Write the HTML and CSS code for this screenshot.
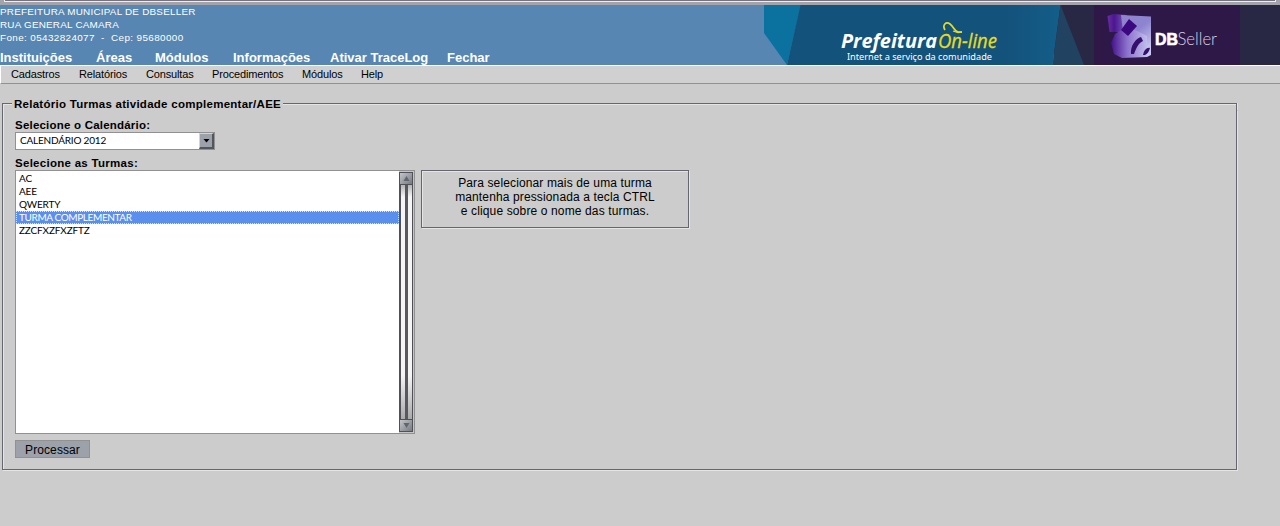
FILE: index.html
```html
<!DOCTYPE html>
<html lang="pt-BR">
<head>
<meta charset="utf-8">
<title>Relatório Turmas</title>
<link rel="stylesheet" href="styles.css">
</head>
<body>
<div class="frame-edge"><div class="frame-line"></div></div>
<header class="banner">
  <div class="banner-info">
    <div class="address">
      <div class="a1">PREFEITURA MUNICIPAL DE DBSELLER</div>
      <div class="a2">RUA GENERAL CAMARA</div>
      <div class="a3">Fone: 05432824077 &nbsp;-&nbsp; Cep: 95680000</div>
    </div>
    <nav class="main-nav"><a>Instituições</a><a>Áreas</a><a>Módulos</a><a>Informações</a><a>Ativar TraceLog</a><a>Fechar</a></nav>
  </div>
  <svg class="banner-art" width="516" height="60" viewBox="0 0 516 60">
    <defs>
      <linearGradient id="sea" x1="0" x2="1"><stop offset="0" stop-color="#13527b"/><stop offset=".8" stop-color="#13527b"/><stop offset="1" stop-color="#135e8a"/></linearGradient>
      <linearGradient id="side" x1="0" x2="1"><stop offset="0" stop-color="#6b2da6"/><stop offset=".35" stop-color="#4b168f"/><stop offset="1" stop-color="#7b5cc0"/></linearGradient>
      <linearGradient id="face" x1="0" y1="0" x2=".6" y2="1"><stop offset="0" stop-color="#9184cc"/><stop offset=".5" stop-color="#8d83cf"/><stop offset="1" stop-color="#c9c8f0"/></linearGradient>
      <linearGradient id="front" x1="0" x2="1"><stop offset="0" stop-color="#43108a"/><stop offset=".45" stop-color="#8c72cc"/><stop offset="1" stop-color="#c0bdec"/></linearGradient>
    </defs>
    <path fill="#282845" d="M290 0h226v60H290z"/>
    <path fill="#0b719f" d="M0 0h37L23 60 0 28z"/>
    <path fill="url(#sea)" d="M36.500 0H296.500L288.500 60H23z"/>
    <path fill="#214361" d="M296.500 0 320 60h-31.500z"/>
    <path fill="#2d1848" d="M330 0h146v60H330z"/>
    <path fill="url(#side)" d="M343.500 11l6-2 13 1v17h-17z"/>
    <path fill="url(#face)" d="M357 10l30 1.500V50l-4 2-22-8z"/>
    <path fill="url(#front)" d="M351 29l12-8 20 10v21l-25 1-8-4-3-11z"/>
    <path fill="#3c087f" d="M365 14l8 7-9 10-7-6z"/>
    <path fill="#35106c" d="M367 49c-1-8 5-16 10-17l2 4c-5 2-7 8-9 13zM379 50c1-5 4-8 7-7-1 4-3 6-5 7z"/>
    <text class="prefeitura" x="77" y="43" textLength="96" lengthAdjust="spacingAndGlyphs">Prefeitura</text>
    <text class="online" x="174" y="43" textLength="59" lengthAdjust="spacingAndGlyphs">On-line</text>
    <path fill="none" stroke="#e9dc1d" stroke-width="1.700" d="M181 25c-3-5 1-9 5-6 4 3 5 9 9 8h3"/>
    <path fill="none" stroke="#e9dc1d" stroke-width="1.300" d="M189 26l5 1.500 4-.5"/>
    <text class="tagline" x="83" y="54.500" textLength="145" lengthAdjust="spacingAndGlyphs">Internet a serviço da comunidade</text>
    <text class="db" x="391" y="39.500" textLength="23" lengthAdjust="spacingAndGlyphs">DB</text>
    <text class="seller" x="413.500" y="39.500" textLength="39.500" lengthAdjust="spacingAndGlyphs">Seller</text>
  </svg>
</header>
<nav class="sub-nav"><a>Cadastros</a><a>Relatórios</a><a>Consultas</a><a>Procedimentos</a><a>Módulos</a><a>Help</a></nav>
<main class="panel">
  <div class="legend-row"><span class="legend-lead"></span><span class="legend">Relatório Turmas atividade complementar/AEE</span><span class="legend-rule"></span></div>
  <div class="panel-body">
    <div class="label">Selecione o Calendário:</div>
    <div class="combo"><span class="combo-text">CALENDÁRIO 2012</span><span class="combo-button"><svg width="7" height="4"><path d="M.5 0h6L3.500 3.500z"/></svg></span></div>
    <div class="label second">Selecione as Turmas:</div>
    <div class="row">
      <div class="listbox">
        <div class="options">
          <div class="option">AC</div>
          <div class="option">AEE</div>
          <div class="option">QWERTY</div>
          <div class="option selected">TURMA COMPLEMENTAR</div>
          <div class="option">ZZCFXZFXZFTZ</div>
        </div>
        <div class="scrollbar">
          <span class="arrow"><svg width="7" height="5"><path d="M.5 5L3.500 0l3 5z"/></svg></span>
          <span class="track"><i></i></span>
          <span class="arrow"><svg width="7" height="5"><path d="M.5 0h6l-3 5z"/></svg></span>
        </div>
      </div>
      <div class="hint">
        <div>Para selecionar mais de uma turma</div>
        <div>mantenha pressionada a tecla CTRL</div>
        <div>e clique sobre o nome das turmas.</div>
      </div>
    </div>
    <div class="button">Processar</div>
  </div>
</main>
</body>
</html>
```
FILE: styles.css
```css
* { box-sizing: border-box; }
body { margin: 0; height: 526px; overflow: hidden; background: #ccc; color: #000; font-family: "Liberation Sans", Arial, sans-serif; font-size: 12px; }
svg { display: block; }
.frame-edge { height: 5px; background: #a3a3ab; padding: 0 4px; }
.frame-line { height: 2px; background: #75717d; border: 1px solid #eee; border-top: 0; }
.banner { height: 60px; display: flex; background: #5786b2; color: #fff; }
.banner-info { width: 764px; }
.banner-art { flex: none; }
.prefeitura { font: italic bold 19.5px "Open Sans", sans-serif; fill: #fff; }
.online { font: italic 20px "Open Sans", sans-serif; fill: #e9dc1d; stroke: #e9dc1d; stroke-width: .3px; }
.tagline { font: 9.5px "Noto Sans", sans-serif; fill: #fff; }
.db { font: bold 17px "Liberation Sans", sans-serif; fill: #fff; stroke: #fff; stroke-width: .7px; }
.seller { font: 300 18px Lato, sans-serif; fill: #d6d0e0; }
.address { height: 45px; font-size: 9.9px; line-height: 13px; white-space: nowrap; }
.a1, .a2 { letter-spacing: .23px; }
.a3 { letter-spacing: .38px; }
.main-nav { display: grid; grid-template-columns: 96px 59px 78px 97px 117px auto; font-size: 13px; line-height: 15px; font-weight: bold; white-space: nowrap; }
.sub-nav { height: 19px; display: grid; grid-template-columns: 68px 67px 66px 90px 59px auto; padding-left: 10px; font-size: 11px; line-height: 17px; letter-spacing: -.15px; background: #d0d0d0; border-top: 1px solid #fff; border-left: 1px solid #fff; border-bottom: 1px solid #919191; }
.panel { width: 1235px; margin: 14px 0 0 2px; }
.legend-row { height: 12px; display: flex; align-items: flex-start; }
.legend { width: 269px; margin-left: 2px; font-size: 11.5px; font-weight: bold; line-height: 13px; letter-spacing: .27px; white-space: nowrap; }
.legend-lead, .legend-rule { height: 7px; margin-top: 5px; border-top: 1px solid #666670; }
.legend-lead { width: 10px; border-left: 1px solid #666670; box-shadow: inset 1px 1px #e5e5e5; }
.legend-rule { flex: 1; border-right: 1px solid #666670; box-shadow: inset 0 1px #e5e5e5, 1px 0 #e5e5e5; }
.panel-body { height: 360px; padding: 9px 12px 0; border: 1px solid #666670; border-top: 0; box-shadow: inset 1px 0 #e5e5e5, 1px 1px #e5e5e5; }
.label { height: 13px; font-size: 11.5px; line-height: 13px; font-weight: bold; letter-spacing: .21px; }
.combo { display: flex; width: 200px; height: 18px; border: 1px solid #919191; background: #fff; font: 10px/15px Lato, sans-serif; letter-spacing: -.2px; }
.combo-text { flex: 1; padding-left: 4px; }
.combo-button { width: 15px; display: flex; align-items: center; justify-content: center; background: #9da1a9; border: 1px solid #d2d4d8; border-right: 2px solid #53565c; border-bottom: 2px solid #53565c; }
.second { margin-top: 7px; letter-spacing: .28px; }
.row { display: flex; gap: 6px; }
.listbox { display: flex; width: 400px; height: 264px; border: 1px solid #919191; background: #fff; }
.options { flex: 1; padding-top: 1px; }
.option { height: 13px; padding-left: 3px; font: 10px/13px Lato, sans-serif; letter-spacing: -.15px; }
.selected { padding-left: 2px; line-height: 11px; letter-spacing: -.38px; border: 1px dotted #d6e4ff; color: #fff; background: #5a8fee; }
.scrollbar { width: 15px; padding: 1px 1px 1px 0; display: flex; flex-direction: column; background: #c5c5c5; }
.arrow { height: 13px; width: 14px; display: flex; justify-content: center; align-items: center; border: 1px solid #4f5157; background: linear-gradient(135deg, #c4c5cc, #777a82); fill: #62656b; }
.track { flex: 1; width: 14px; padding: 0 4px; border: 1px solid #4f5157; border-width: 0 1px 0 2px; background: linear-gradient(#b5b5b5, #f4f4f4 12px, #f4f4f4 190px, #aaa); }
.track i { display: block; width: 3px; height: 100%; background: #55595d; }
.hint { width: 268px; height: 58px; padding-top: 5px; border: 1px solid #666670; box-shadow: inset 1px 1px #e5e5e5, 1px 1px #e5e5e5; line-height: 14px; letter-spacing: .13px; text-align: center; white-space: nowrap; }
.button { width: 75px; height: 18px; margin-top: 6px; border: 1px solid #919191; background: #9da1aa; line-height: 18px; letter-spacing: .1px; text-align: center; }
```
